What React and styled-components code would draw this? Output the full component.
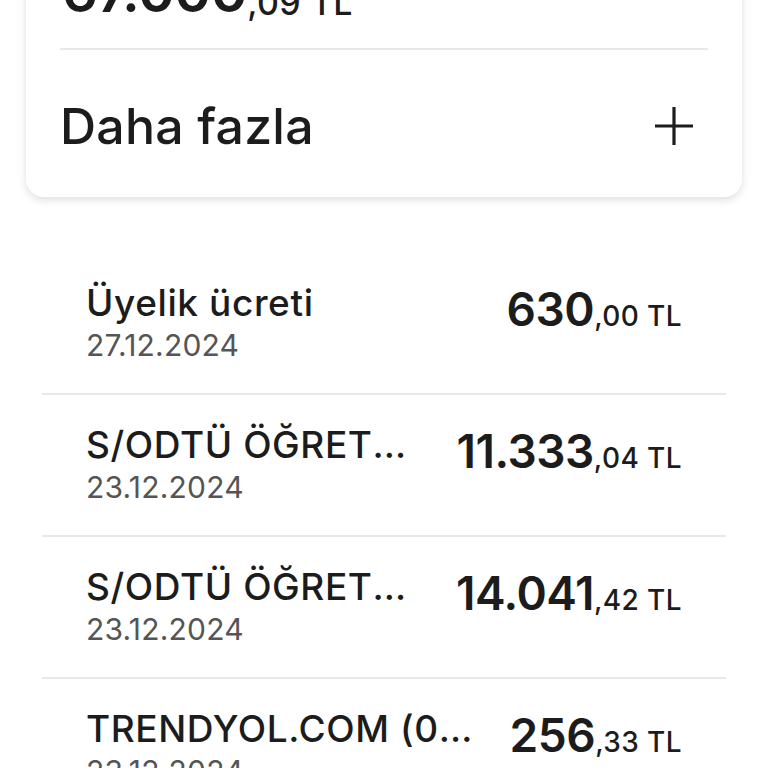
import React from "react";
import styled, { createGlobalStyle } from "styled-components";

const Global = createGlobalStyle`
  html, body { margin: 0; padding: 0; background: #ffffff; }
  body { font-family: Inter, "Noto Sans", sans-serif; color: #1c1c1c; }
  * { box-sizing: border-box; }
`;

const Page = styled.div`
  width: 768px;
  height: 768px;
  overflow: hidden;
  background: #ffffff;
`;

const Card = styled.section`
  margin: -52px 26px 0 26px;
  background: #ffffff;
  border-radius: 18px;
  box-shadow: 0 3px 8px rgba(0, 0, 0, 0.13);
  padding: 0 34px;
`;

const TopAmount = styled.div`
  height: 102px;
  display: flex;
  align-items: flex-end;
  padding: 0 0 28px 2px;
  border-bottom: 2px solid #e8e8e8;
  line-height: 1;
`;

const Big = styled.span`
  font-size: ${(p) => p.$size}px;
  font-weight: 600;
  letter-spacing: -0.5px;
`;

const Small = styled.span`
  font-size: ${(p) => p.$size}px;
  font-weight: 500;
  letter-spacing: 0.4px;
`;

const MoreRow = styled.div`
  height: 147px;
  display: flex;
  align-items: center;
  justify-content: space-between;
  padding: 5px 14px 0 0;
`;

const MoreLabel = styled.span`
  font-size: 50px;
  font-weight: 500;
  letter-spacing: 0.2px;
`;

const PlusIcon = () => (
  <svg width="40" height="40" viewBox="0 0 40 40" fill="none">
    <path d="M20 1v38M1 20h38" stroke="#1c1c1c" strokeWidth="3.2" />
  </svg>
);

const List = styled.ul`
  list-style: none;
  margin: 56px 42px 0 42px;
  padding: 0;
`;

const Row = styled.li`
  height: 142px;
  display: flex;
  justify-content: space-between;
  align-items: flex-start;
  gap: 30px;
  padding: 27px 44px 0 44px;
  border-bottom: 2px solid #e8e8e8;
`;

const Info = styled.div`
  min-width: 0;
  display: flex;
  flex-direction: column;
`;

const Title = styled.div`
  font-size: 37px;
  font-weight: 500;
  line-height: 46px;
  letter-spacing: 0.6px;
  white-space: nowrap;
  overflow: hidden;
  text-overflow: ellipsis;
`;

const DateText = styled.div`
  font-size: 30px;
  font-weight: 400;
  line-height: 38px;
  letter-spacing: 0.2px;
  color: #555555;
`;

const Amount = styled.div`
  flex-shrink: 0;
  padding-top: 6px;
  line-height: 1;
  white-space: nowrap;
  display: flex;
  align-items: baseline;
`;

const rows = [
  { title: "Üyelik ücreti", date: "27.12.2024", int: "630", dec: ",00 TL" },
  { title: "S/ODTÜ ÖĞRETMENLER", date: "23.12.2024", int: "11.333", dec: ",04 TL" },
  { title: "S/ODTÜ ÖĞRETMENLER", date: "23.12.2024", int: "14.041", dec: ",42 TL" },
  { title: "TRENDYOL.COM (0850)", date: "23.12.2024", int: "256", dec: ",33 TL" },
];

export default function App() {
  return (
    <Page>
      <Global />
      <Card>
        <TopAmount>
          <Big $size={56}>67.000</Big>
          <Small $size={34}>,09 TL</Small>
        </TopAmount>
        <MoreRow>
          <MoreLabel>Daha fazla</MoreLabel>
          <PlusIcon />
        </MoreRow>
      </Card>
      <List>
        {rows.map((r, i) => (
          <Row key={i}>
            <Info>
              <Title>{r.title}</Title>
              <DateText>{r.date}</DateText>
            </Info>
            <Amount>
              <Big $size={46}>{r.int}</Big>
              <Small $size={28}>{r.dec}</Small>
            </Amount>
          </Row>
        ))}
      </List>
    </Page>
  );
}
